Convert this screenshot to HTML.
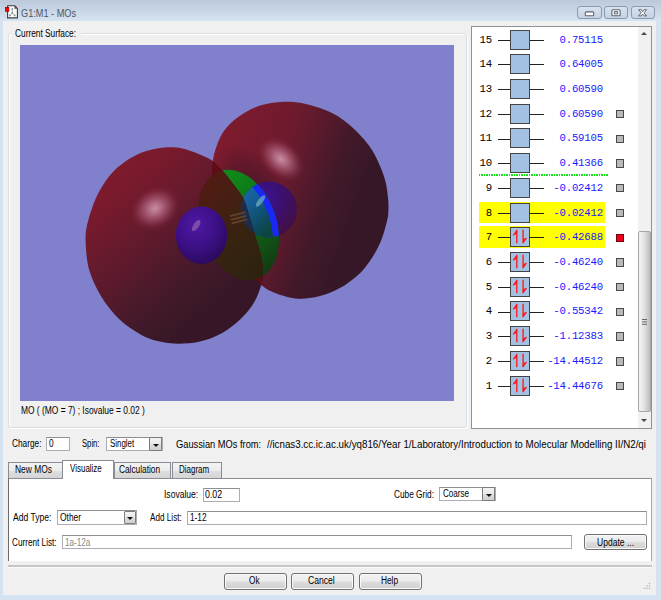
<!DOCTYPE html>
<html><head><meta charset="utf-8"><title>G1:M1 - MOs</title>
<style>
html,body{margin:0;padding:0}
body{width:661px;height:600px;overflow:hidden;position:relative;background:#d3e1f1;font-family:"Liberation Sans", sans-serif}
.abs,.t,.m,div,i{position:absolute;box-sizing:border-box}
.t{white-space:pre;line-height:1;transform-origin:0 0;display:block}
#titlebar{left:0;top:0;width:661px;height:22px;background:linear-gradient(#bbcadb,#c8d6e6 50%,#d8e5f3)}
#frame{left:0;top:0;width:661px;height:600px;background:#d5e2f1}
#content{left:3px;top:21px;width:653px;height:573.5px;background:#f0f0f0}
.cb{top:5.5px;height:13.5px;border:1px solid #8d9aae;border-radius:3px;background:linear-gradient(#d8e2ef,#c4d2e4)}
#gb{left:7.5px;top:33px;width:459px;height:394.5px;border:1px solid #d5dfe5;border-radius:3px;box-shadow:inset 1px 1px 0 #fff, 1px 1px 0 #fff}
#gbl{left:12px;top:26px;width:70px;height:14px;background:#f0f0f0}
#view{left:20px;top:45px;width:434px;height:355.5px;background:#8080cc;overflow:hidden}
#mop{left:470.5px;top:26px;width:181px;height:402.5px;background:#fff;border:1px solid #8d9197}
#sb{left:166.5px;top:0px;width:12.5px;height:400.5px;background:#f1f1f1}
#thumb{left:0px;top:204px;width:12.5px;height:180.5px;border:1px solid #a6a6aa;border-radius:2px;background:linear-gradient(90deg,#f3f3f3 0,#e6e6e6 40%,#c8c8cc 85%,#b8b8be)}
.hl{left:7.5px;width:126px;height:21.7px;background:#ffff00}
.ln{left:26.8px;width:45.5px;height:1px;background:#222}
.bx{left:38.8px;width:20px;height:20px;background:#a3c1e3;border:1px solid #444}
.m{font:10.7px "Liberation Mono", monospace;line-height:1;white-space:pre;letter-spacing:-0.22px}
.num{left:0;width:20.4px;text-align:right;color:#000}
.en{left:40px;width:91.4px;text-align:right;color:#1a1aff}
.sq{left:144.3px;width:8.4px;height:8.4px;background:#b9b9b9;border:1px solid #484848}
.sq.red{background:#e8001c;border-color:#7a0010}
.up,.dn{display:block}
.inp{background:#fff;border:1px solid #abadb3;border-top-color:#8e8f93}
.btn{border:1px solid #707070;border-radius:3px;background:linear-gradient(#f2f2f2,#ebebeb 48%,#dddddd 52%,#cfcfcf);box-shadow:inset 0 0 0 1px #fafafa}
.dd{border:1px solid #7c7c7c;border-radius:1px;background:linear-gradient(#f2f2f2,#e9e9e9 48%,#dcdcdc 52%,#d0d0d0)}
.dd:after{content:"";position:absolute;left:50%;top:50%;margin:0px 0 0 -3px;border:3px solid transparent;border-top:3.4px solid #111;border-bottom:0}
.tab{border:1px solid #898c95;border-bottom:0;background:linear-gradient(#f3f3f3,#ebebeb 50%,#dedede 52%,#d4d4d4)}
.tab.sel{background:#fff}
#pane{left:7.5px;top:478px;width:644.5px;height:83px;background:#fff;border:1px solid #898c95;border-left-color:#6a6a6a;border-right-color:#a8a8a8;border-bottom:0}
</style></head><body>
<div id="frame"></div>
<div id="titlebar"></div>
<div id="content"></div>
<!-- window icon -->
<svg style="position:absolute;left:0;top:0" width="24" height="22" viewBox="0 0 24 22">
 <path d="M7.6 5.8h7.2l2.6 2.8v9.3h-9.8z" fill="#fff" stroke="#3a3a3a" stroke-width="1.1" stroke-linejoin="round"/>
 <path d="M14.8 5.8v2.8h2.6" fill="none" stroke="#555" stroke-width=".8"/>
 <circle cx="15.8" cy="7.3" r=".8" fill="#d00"/>
 <path d="M12.3 9v4M12.3 13l-2.4 2.5M12.3 13l2.4 2.5" stroke="#999" stroke-width="0.8" fill="none"/>
 <g fill="#8a8a8a"><circle cx="12.3" cy="8.9" r=".9"/><circle cx="12.3" cy="12.9" r=".9"/><circle cx="9.9" cy="15.5" r=".9"/><circle cx="14.7" cy="15.5" r=".9"/></g>
 <rect x="5.3" y="7.3" width="3.6" height="4" fill="#ff0000" stroke="#8a0000" stroke-width=".6"/>
</svg>
<div class="cb" style="left:577px;width:24.5px"></div>
<div class="cb" style="left:604px;width:24px"></div>
<div class="cb" style="left:630.5px;width:24.5px"></div>
<svg style="position:absolute;left:570px;top:0" width="91" height="22" viewBox="570 0 91 22">
 <rect x="585.3" y="11.9" width="8.4" height="3.8" rx="1" fill="#fff" stroke="#5f6670" stroke-width="1.1"/>
 <rect x="611.9" y="9.8" width="8.2" height="5.9" rx="1" fill="#fff" stroke="#5f6670" stroke-width="1.1"/>
 <rect x="614.3" y="11.6" width="3.4" height="2.3" fill="#c9d6e6" stroke="#5f6670" stroke-width=".9"/>
 <path d="M638.6 9.7h2.6l1.4 1.9 1.4-1.9h2.6l-2.6 3.1 2.6 3.1h-2.6l-1.4-1.9-1.4 1.9h-2.6l2.6-3.1z" fill="#fff" stroke="#5f6670" stroke-width="1" stroke-linejoin="round"/>
</svg>

<div id="gb"></div><div id="gbl"></div>
<div id="view"><svg width="434" height="356" viewBox="20 45 434 356" style="position:absolute;left:0;top:0">
<defs>
 <linearGradient id="s_gl" gradientUnits="userSpaceOnUse" x1="115" y1="165" x2="224.3" y2="295.2"><stop offset="0" stop-color="#7e1b2e"/><stop offset=".13" stop-color="#7a1a2c"/><stop offset=".36" stop-color="#681a2d"/><stop offset=".53" stop-color="#5a1a2c"/><stop offset=".66" stop-color="#4e1a2b"/><stop offset=".82" stop-color="#41192a"/><stop offset=".95" stop-color="#3a1828"/><stop offset="1" stop-color="#371727"/></linearGradient>
 <linearGradient id="s_gr" gradientUnits="userSpaceOnUse" x1="213" y1="160" x2="358.7" y2="213"><stop offset="0" stop-color="#7e1b2e"/><stop offset=".4" stop-color="#6e1a2d"/><stop offset=".58" stop-color="#5a1a2c"/><stop offset=".77" stop-color="#42192a"/><stop offset=".95" stop-color="#381828"/><stop offset="1" stop-color="#361727"/></linearGradient>
 <radialGradient id="hl1"><stop offset="0" stop-color="#d49cb0" stop-opacity=".9"/><stop offset=".3" stop-color="#bc7690" stop-opacity=".78"/><stop offset=".6" stop-color="#a4546e" stop-opacity=".5"/><stop offset=".85" stop-color="#8c3450" stop-opacity=".15"/><stop offset="1" stop-color="#7a1d33" stop-opacity="0"/></radialGradient>
 <radialGradient id="shd"><stop offset="0" stop-color="#2e1424" stop-opacity=".5"/><stop offset=".6" stop-color="#2e1424" stop-opacity=".3"/><stop offset="1" stop-color="#2e1424" stop-opacity="0"/></radialGradient>
 <radialGradient id="s_gp" cx=".4" cy=".32" r=".7"><stop offset="0" stop-color="#4f18a2"/><stop offset=".55" stop-color="#3d1088"/><stop offset="1" stop-color="#2b0a5c"/></radialGradient>
 <radialGradient id="gp2" cx=".35" cy=".3" r=".8"><stop offset="0" stop-color="#3c1296"/><stop offset=".5" stop-color="#3b1070"/><stop offset="1" stop-color="#43103c"/></radialGradient>
 <linearGradient id="gg" gradientUnits="userSpaceOnUse" x1="228" y1="172" x2="266" y2="276"><stop offset="0" stop-color="#0f8c1a"/><stop offset=".3" stop-color="#0e7c18"/><stop offset=".65" stop-color="#0f5e15"/><stop offset="1" stop-color="#143814"/></linearGradient>
 <linearGradient id="go" gradientUnits="userSpaceOnUse" x1="205" y1="175" x2="260" y2="275"><stop offset="0" stop-color="#541a12"/><stop offset=".35" stop-color="#432012"/><stop offset=".7" stop-color="#332410"/><stop offset="1" stop-color="#2c220f"/></linearGradient>
 <linearGradient id="s_gb" gradientUnits="userSpaceOnUse" x1="250" y1="185" x2="275" y2="238"><stop offset="0" stop-color="#1b70b0"/><stop offset=".45" stop-color="#155e96"/><stop offset=".8" stop-color="#0e4c62"/><stop offset="1" stop-color="#0b4640"/></linearGradient>
 <clipPath id="cSph"><ellipse cx="269" cy="209.5" rx="28" ry="28"/></clipPath>
 <clipPath id="cL"><path d="M173.3 147.3C177.8 147.6 182.3 148.4 187.0 149.7C191.7 151.0 197.2 153.3 201.5 155.2C205.8 157.1 209.0 158.1 212.8 161.0C216.6 163.9 220.4 168.2 224.1 172.4C227.8 176.6 231.4 181.5 234.7 186.0C238.0 190.5 241.2 193.9 243.8 199.6C246.4 205.3 248.6 214.1 250.5 220.0C252.4 225.9 253.2 229.0 255.0 235.0C256.8 241.0 259.7 250.0 261.0 256.0C262.3 262.0 262.9 266.3 263.0 271.0C263.1 275.7 263.0 278.7 261.5 284.0C260.0 289.3 257.5 296.7 254.0 302.6C250.5 308.5 245.7 314.2 240.4 319.3C235.1 324.4 228.8 329.2 222.2 332.9C215.6 336.6 208.3 339.5 201.0 341.3C193.7 343.1 185.4 343.8 178.3 343.8C171.2 343.8 165.0 342.9 158.7 341.3C152.4 339.7 147.1 338.1 140.5 334.4C133.9 330.7 125.8 325.6 119.3 319.3C112.8 313.0 106.2 304.9 101.2 296.6C96.2 288.3 91.6 278.7 89.0 269.3C86.4 259.9 85.8 247.7 85.6 240.0C85.3 232.3 86.3 228.9 87.5 223.3C88.7 217.8 90.4 212.2 92.5 206.7C94.6 201.1 96.8 195.6 100.0 190.0C103.2 184.4 107.5 178.0 111.7 173.3C115.9 168.6 120.0 165.2 125.0 161.7C130.0 158.2 135.9 154.8 141.7 152.5C147.5 150.2 154.7 148.9 160.0 148.0C165.3 147.1 168.8 147.0 173.3 147.3z"/></clipPath>
 <clipPath id="cR"><path d="M280.0 102.0C285.3 101.5 289.0 101.5 294.0 102.0C299.0 102.5 304.0 103.3 310.0 105.0C316.0 106.7 324.0 109.2 330.0 112.0C336.0 114.8 341.0 118.2 346.0 122.0C351.0 125.8 355.7 130.3 360.0 135.0C364.3 139.7 368.7 144.8 372.0 150.0C375.3 155.2 377.7 160.7 380.0 166.0C382.3 171.3 384.3 176.7 385.6 182.0C386.9 187.3 387.5 193.3 388.0 198.0C388.5 202.7 388.6 206.2 388.4 210.0C388.2 213.8 388.5 215.2 387.0 221.0C385.5 226.8 383.3 236.4 379.4 244.5C375.5 252.6 369.9 262.2 363.5 269.4C357.1 276.6 348.4 283.1 340.8 287.6C333.2 292.1 325.6 294.8 318.0 296.6C310.4 298.4 302.9 299.3 295.4 298.5C287.8 297.7 278.6 294.4 272.7 292.0C266.8 289.6 263.8 287.2 260.2 284.0C256.6 280.8 254.2 276.8 250.9 272.6C247.6 268.4 243.6 263.5 240.3 259.0C237.0 254.5 233.8 251.1 231.2 245.4C228.6 239.7 226.4 230.9 224.5 225.0C222.6 219.1 221.8 216.0 220.0 210.0C218.2 204.0 215.3 195.0 214.0 189.0C212.7 183.0 212.2 178.8 212.0 174.0C211.8 169.2 212.3 164.3 213.0 160.0C213.7 155.7 214.5 152.3 216.0 148.0C217.5 143.7 219.3 138.3 222.0 134.0C224.7 129.7 228.0 125.7 232.0 122.0C236.0 118.3 241.0 114.8 246.0 112.0C251.0 109.2 256.3 106.7 262.0 105.0C267.7 103.3 274.7 102.5 280.0 102.0z"/></clipPath>
 <clipPath id="cLens"><ellipse cx="238.5" cy="225" rx="38" ry="57" transform="rotate(-19.5 238.5 225)"/></clipPath>
</defs>
<path d="M280.0 102.0C285.3 101.5 289.0 101.5 294.0 102.0C299.0 102.5 304.0 103.3 310.0 105.0C316.0 106.7 324.0 109.2 330.0 112.0C336.0 114.8 341.0 118.2 346.0 122.0C351.0 125.8 355.7 130.3 360.0 135.0C364.3 139.7 368.7 144.8 372.0 150.0C375.3 155.2 377.7 160.7 380.0 166.0C382.3 171.3 384.3 176.7 385.6 182.0C386.9 187.3 387.5 193.3 388.0 198.0C388.5 202.7 388.6 206.2 388.4 210.0C388.2 213.8 388.5 215.2 387.0 221.0C385.5 226.8 383.3 236.4 379.4 244.5C375.5 252.6 369.9 262.2 363.5 269.4C357.1 276.6 348.4 283.1 340.8 287.6C333.2 292.1 325.6 294.8 318.0 296.6C310.4 298.4 302.9 299.3 295.4 298.5C287.8 297.7 278.6 294.4 272.7 292.0C266.8 289.6 263.8 287.2 260.2 284.0C256.6 280.8 254.2 276.8 250.9 272.6C247.6 268.4 243.6 263.5 240.3 259.0C237.0 254.5 233.8 251.1 231.2 245.4C228.6 239.7 226.4 230.9 224.5 225.0C222.6 219.1 221.8 216.0 220.0 210.0C218.2 204.0 215.3 195.0 214.0 189.0C212.7 183.0 212.2 178.8 212.0 174.0C211.8 169.2 212.3 164.3 213.0 160.0C213.7 155.7 214.5 152.3 216.0 148.0C217.5 143.7 219.3 138.3 222.0 134.0C224.7 129.7 228.0 125.7 232.0 122.0C236.0 118.3 241.0 114.8 246.0 112.0C251.0 109.2 256.3 106.7 262.0 105.0C267.7 103.3 274.7 102.5 280.0 102.0z" fill="url(#s_gr)"/>
<g clip-path="url(#cR)"><ellipse cx="252" cy="192" rx="30" ry="52" transform="rotate(-30 252 192)" fill="url(#shd)"/></g>
<ellipse cx="281" cy="159" rx="28" ry="19" transform="rotate(42 281 159)" fill="url(#hl1)"/>
<ellipse cx="269" cy="209.5" rx="28" ry="28" fill="url(#gp2)"/>
<!-- green lens -->
<ellipse cx="238.5" cy="225" rx="38" ry="57" transform="rotate(-19.5 238.5 225)" fill="url(#gg)"/>
<g clip-path="url(#cLens)">
 <ellipse cx="269" cy="209.5" rx="28" ry="28" fill="#1a28f5"/>
 <g clip-path="url(#cSph)"><ellipse cx="232.6" cy="227.1" rx="38" ry="57" transform="rotate(-19.5 232.6 227.1)" fill="url(#s_gb)"/></g>
 <ellipse cx="260.5" cy="201" rx="2.4" ry="7" transform="rotate(38 260.5 201)" fill="#7ab8c8" fill-opacity=".65"/>
</g>
<!-- left lobe -->
<path d="M173.3 147.3C177.8 147.6 182.3 148.4 187.0 149.7C191.7 151.0 197.2 153.3 201.5 155.2C205.8 157.1 209.0 158.1 212.8 161.0C216.6 163.9 220.4 168.2 224.1 172.4C227.8 176.6 231.4 181.5 234.7 186.0C238.0 190.5 241.2 193.9 243.8 199.6C246.4 205.3 248.6 214.1 250.5 220.0C252.4 225.9 253.2 229.0 255.0 235.0C256.8 241.0 259.7 250.0 261.0 256.0C262.3 262.0 262.9 266.3 263.0 271.0C263.1 275.7 263.0 278.7 261.5 284.0C260.0 289.3 257.5 296.7 254.0 302.6C250.5 308.5 245.7 314.2 240.4 319.3C235.1 324.4 228.8 329.2 222.2 332.9C215.6 336.6 208.3 339.5 201.0 341.3C193.7 343.1 185.4 343.8 178.3 343.8C171.2 343.8 165.0 342.9 158.7 341.3C152.4 339.7 147.1 338.1 140.5 334.4C133.9 330.7 125.8 325.6 119.3 319.3C112.8 313.0 106.2 304.9 101.2 296.6C96.2 288.3 91.6 278.7 89.0 269.3C86.4 259.9 85.8 247.7 85.6 240.0C85.3 232.3 86.3 228.9 87.5 223.3C88.7 217.8 90.4 212.2 92.5 206.7C94.6 201.1 96.8 195.6 100.0 190.0C103.2 184.4 107.5 178.0 111.7 173.3C115.9 168.6 120.0 165.2 125.0 161.7C130.0 158.2 135.9 154.8 141.7 152.5C147.5 150.2 154.7 148.9 160.0 148.0C165.3 147.1 168.8 147.0 173.3 147.3z" fill="url(#s_gl)"/>
<g clip-path="url(#cL)">
 <path d="M280.0 102.0C285.3 101.5 289.0 101.5 294.0 102.0C299.0 102.5 304.0 103.3 310.0 105.0C316.0 106.7 324.0 109.2 330.0 112.0C336.0 114.8 341.0 118.2 346.0 122.0C351.0 125.8 355.7 130.3 360.0 135.0C364.3 139.7 368.7 144.8 372.0 150.0C375.3 155.2 377.7 160.7 380.0 166.0C382.3 171.3 384.3 176.7 385.6 182.0C386.9 187.3 387.5 193.3 388.0 198.0C388.5 202.7 388.6 206.2 388.4 210.0C388.2 213.8 388.5 215.2 387.0 221.0C385.5 226.8 383.3 236.4 379.4 244.5C375.5 252.6 369.9 262.2 363.5 269.4C357.1 276.6 348.4 283.1 340.8 287.6C333.2 292.1 325.6 294.8 318.0 296.6C310.4 298.4 302.9 299.3 295.4 298.5C287.8 297.7 278.6 294.4 272.7 292.0C266.8 289.6 263.8 287.2 260.2 284.0C256.6 280.8 254.2 276.8 250.9 272.6C247.6 268.4 243.6 263.5 240.3 259.0C237.0 254.5 233.8 251.1 231.2 245.4C228.6 239.7 226.4 230.9 224.5 225.0C222.6 219.1 221.8 216.0 220.0 210.0C218.2 204.0 215.3 195.0 214.0 189.0C212.7 183.0 212.2 178.8 212.0 174.0C211.8 169.2 212.3 164.3 213.0 160.0C213.7 155.7 214.5 152.3 216.0 148.0C217.5 143.7 219.3 138.3 222.0 134.0C224.7 129.7 228.0 125.7 232.0 122.0C236.0 118.3 241.0 114.8 246.0 112.0C251.0 109.2 256.3 106.7 262.0 105.0C267.7 103.3 274.7 102.5 280.0 102.0z" fill="#5e0d16"/>
 <ellipse cx="238.5" cy="225" rx="38" ry="57" transform="rotate(-19.5 238.5 225)" fill="url(#go)"/>
 <g clip-path="url(#cLens)"><ellipse cx="269" cy="209.5" rx="28" ry="28" fill="#15305c" fill-opacity=".8"/></g>
</g>
<ellipse cx="155" cy="208.3" rx="27" ry="22" transform="rotate(-30 155 208.3)" fill="url(#hl1)"/>
<ellipse cx="201.5" cy="235.2" rx="25.7" ry="28.7" fill="url(#s_gp)"/>
<ellipse cx="196.2" cy="225.5" rx="2.8" ry="6.5" transform="rotate(35 196.2 225.5)" fill="#a070b4" fill-opacity=".6"/>
<path d="M230 216.2l15.5-4M230.8 219.8l15.5-4M231.6 223.4l15.5-4" stroke="#5e442a" stroke-width="1.9" fill="none"/>
</svg></div>

<div id="mop">
<div class="ln" style="top:12.6px"></div>
<div class="bx" style="top:2.5px"></div>
<span class="m num" style="top:7.5px">15</span>
<span class="m en" style="top:7.5px">0.75115</span>
<div class="ln" style="top:37.3px"></div>
<div class="bx" style="top:27.2px"></div>
<span class="m num" style="top:32.2px">14</span>
<span class="m en" style="top:32.2px">0.64005</span>
<div class="ln" style="top:62.0px"></div>
<div class="bx" style="top:51.9px"></div>
<span class="m num" style="top:56.9px">13</span>
<span class="m en" style="top:56.9px">0.60590</span>
<div class="ln" style="top:86.8px"></div>
<div class="bx" style="top:76.7px"></div>
<span class="m num" style="top:81.7px">12</span>
<span class="m en" style="top:81.7px">0.60590</span>
<div class="sq" style="top:83.0px"></div>
<div class="ln" style="top:111.5px"></div>
<div class="bx" style="top:101.4px"></div>
<span class="m num" style="top:106.4px">11</span>
<span class="m en" style="top:106.4px">0.59105</span>
<div class="sq" style="top:107.7px"></div>
<div class="ln" style="top:136.2px"></div>
<div class="bx" style="top:126.1px"></div>
<span class="m num" style="top:131.1px">10</span>
<span class="m en" style="top:131.1px">0.41366</span>
<div class="sq" style="top:132.4px"></div>
<div class="ln" style="top:160.9px"></div>
<div class="bx" style="top:150.8px"></div>
<span class="m num" style="top:155.8px">9</span>
<span class="m en" style="top:155.8px">-0.02412</span>
<div class="sq" style="top:157.1px"></div>
<div class="hl" style="top:174.5px"></div>
<div class="ln" style="top:185.6px"></div>
<div class="bx" style="top:175.5px"></div>
<span class="m num" style="top:180.5px">8</span>
<span class="m en" style="top:180.5px">-0.02412</span>
<div class="sq" style="top:181.8px"></div>
<div class="hl" style="top:199.3px"></div>
<div class="ln" style="top:210.4px"></div>
<div class="bx" style="top:200.3px"><svg width="18" height="18" viewBox="0 0 18 18" style="position:absolute;left:0;top:0"><g stroke="#ff1515" stroke-width="1.3" fill="#ff1515" stroke-linejoin="round"><path d="M5.8 1.8V15.2" fill="none"/><path d="M5.6 2.4L2.1 7.2L5.6 5.6z" stroke-width=".8"/><path d="M12.1 1.8V15.2" fill="none"/><path d="M12.3 14.8L15.6 10.2L12.3 11.4z" stroke-width=".8"/></g></svg></div>
<span class="m num" style="top:205.3px">7</span>
<span class="m en" style="top:205.3px">-0.42688</span>
<div class="sq red" style="top:206.6px"></div>
<div class="ln" style="top:235.1px"></div>
<div class="bx" style="top:225.0px"><svg width="18" height="18" viewBox="0 0 18 18" style="position:absolute;left:0;top:0"><g stroke="#ff1515" stroke-width="1.3" fill="#ff1515" stroke-linejoin="round"><path d="M5.8 1.8V15.2" fill="none"/><path d="M5.6 2.4L2.1 7.2L5.6 5.6z" stroke-width=".8"/><path d="M12.1 1.8V15.2" fill="none"/><path d="M12.3 14.8L15.6 10.2L12.3 11.4z" stroke-width=".8"/></g></svg></div>
<span class="m num" style="top:230.0px">6</span>
<span class="m en" style="top:230.0px">-0.46240</span>
<div class="sq" style="top:231.3px"></div>
<div class="ln" style="top:259.8px"></div>
<div class="bx" style="top:249.7px"><svg width="18" height="18" viewBox="0 0 18 18" style="position:absolute;left:0;top:0"><g stroke="#ff1515" stroke-width="1.3" fill="#ff1515" stroke-linejoin="round"><path d="M5.8 1.8V15.2" fill="none"/><path d="M5.6 2.4L2.1 7.2L5.6 5.6z" stroke-width=".8"/><path d="M12.1 1.8V15.2" fill="none"/><path d="M12.3 14.8L15.6 10.2L12.3 11.4z" stroke-width=".8"/></g></svg></div>
<span class="m num" style="top:254.7px">5</span>
<span class="m en" style="top:254.7px">-0.46240</span>
<div class="sq" style="top:256.0px"></div>
<div class="ln" style="top:284.5px"></div>
<div class="bx" style="top:274.4px"><svg width="18" height="18" viewBox="0 0 18 18" style="position:absolute;left:0;top:0"><g stroke="#ff1515" stroke-width="1.3" fill="#ff1515" stroke-linejoin="round"><path d="M5.8 1.8V15.2" fill="none"/><path d="M5.6 2.4L2.1 7.2L5.6 5.6z" stroke-width=".8"/><path d="M12.1 1.8V15.2" fill="none"/><path d="M12.3 14.8L15.6 10.2L12.3 11.4z" stroke-width=".8"/></g></svg></div>
<span class="m num" style="top:279.4px">4</span>
<span class="m en" style="top:279.4px">-0.55342</span>
<div class="sq" style="top:280.7px"></div>
<div class="ln" style="top:309.2px"></div>
<div class="bx" style="top:299.1px"><svg width="18" height="18" viewBox="0 0 18 18" style="position:absolute;left:0;top:0"><g stroke="#ff1515" stroke-width="1.3" fill="#ff1515" stroke-linejoin="round"><path d="M5.8 1.8V15.2" fill="none"/><path d="M5.6 2.4L2.1 7.2L5.6 5.6z" stroke-width=".8"/><path d="M12.1 1.8V15.2" fill="none"/><path d="M12.3 14.8L15.6 10.2L12.3 11.4z" stroke-width=".8"/></g></svg></div>
<span class="m num" style="top:304.1px">3</span>
<span class="m en" style="top:304.1px">-1.12383</span>
<div class="sq" style="top:305.4px"></div>
<div class="ln" style="top:334.0px"></div>
<div class="bx" style="top:323.9px"><svg width="18" height="18" viewBox="0 0 18 18" style="position:absolute;left:0;top:0"><g stroke="#ff1515" stroke-width="1.3" fill="#ff1515" stroke-linejoin="round"><path d="M5.8 1.8V15.2" fill="none"/><path d="M5.6 2.4L2.1 7.2L5.6 5.6z" stroke-width=".8"/><path d="M12.1 1.8V15.2" fill="none"/><path d="M12.3 14.8L15.6 10.2L12.3 11.4z" stroke-width=".8"/></g></svg></div>
<span class="m num" style="top:328.9px">2</span>
<span class="m en" style="top:328.9px">-14.44512</span>
<div class="sq" style="top:330.2px"></div>
<div class="ln" style="top:358.7px"></div>
<div class="bx" style="top:348.6px"><svg width="18" height="18" viewBox="0 0 18 18" style="position:absolute;left:0;top:0"><g stroke="#ff1515" stroke-width="1.3" fill="#ff1515" stroke-linejoin="round"><path d="M5.8 1.8V15.2" fill="none"/><path d="M5.6 2.4L2.1 7.2L5.6 5.6z" stroke-width=".8"/><path d="M12.1 1.8V15.2" fill="none"/><path d="M12.3 14.8L15.6 10.2L12.3 11.4z" stroke-width=".8"/></g></svg></div>
<span class="m num" style="top:353.6px">1</span>
<span class="m en" style="top:353.6px">-14.44676</span>
<div class="sq" style="top:354.9px"></div>
<div style="left:7.5px;top:147.2px;width:129px;height:1.8px;background:repeating-linear-gradient(90deg,#0fe30f 0 1.35px,transparent 1.35px 2.5px)"></div>
<div id="sb"><div id="thumb"></div>
<div style="left:3.2px;top:4.7px;border:3px solid transparent;border-bottom:3.3px solid #484848;border-top:0"></div>
<div style="left:3.2px;top:391.5px;border:3px solid transparent;border-top:3.3px solid #484848;border-bottom:0"></div>
<div style="left:4px;top:291.8px;width:5px;height:1px;background:#666;box-shadow:0 2.4px 0 #666,0 4.8px 0 #666"></div>
</div>
</div>

<!-- charge / spin row -->
<div class="inp" style="left:46px;top:436.5px;width:23.5px;height:14.5px"></div>
<div class="inp" style="left:106px;top:436.5px;width:56.5px;height:14.5px"></div>
<div class="dd" style="left:149.3px;top:437px;width:12.7px;height:13.5px"></div>

<!-- tabs -->
<div class="tab" style="left:7.5px;top:462px;width:55px;height:17px"></div>
<div class="tab" style="left:113.5px;top:462px;width:57.5px;height:17px"></div>
<div class="tab" style="left:171.5px;top:462px;width:50px;height:17px"></div>
<div id="pane"></div>
<div class="tab sel" style="left:62px;top:459.5px;width:52px;height:19.5px"></div>

<div class="inp" style="left:203px;top:487.5px;width:36.5px;height:14px"></div>
<div class="inp" style="left:439px;top:486.5px;width:56.5px;height:14.5px"></div>
<div class="dd" style="left:482.3px;top:487px;width:12.7px;height:13.5px"></div>
<div class="inp" style="left:57px;top:510px;width:79.5px;height:14.5px"></div>
<div class="dd" style="left:123.5px;top:510.5px;width:12.7px;height:13.5px"></div>
<div class="inp" style="left:186.5px;top:510.5px;width:460.5px;height:14.5px"></div>
<div class="inp" style="left:61.5px;top:534.5px;width:510px;height:14.5px"></div>
<div class="btn" style="left:584px;top:533.5px;width:62.5px;height:16.5px"></div>

<div style="left:7.5px;top:565px;width:644.5px;height:1.6px;background:#c6c6c6;box-shadow:0 1px 0 #fbfbfb"></div>
<div class="btn" style="left:223.5px;top:572.5px;width:63px;height:17px"></div>
<div class="btn" style="left:291px;top:572.5px;width:63px;height:17px"></div>
<div class="btn" style="left:358.5px;top:572.5px;width:63px;height:17px"></div>
<svg style="position:absolute;left:642px;top:581px" width="10" height="10" viewBox="642 581 10 10"><g fill="#b4b4b4"><rect x="648.9" y="582.7" width="1.3" height="1.3"/><rect x="648.9" y="585.2" width="1.3" height="1.3"/><rect x="648.9" y="587.7" width="1.3" height="1.3"/><rect x="646.4" y="585.2" width="1.3" height="1.3"/><rect x="646.4" y="587.7" width="1.3" height="1.3"/><rect x="643.9" y="587.7" width="1.3" height="1.3"/></g></svg>

<span class="t" style="left:21.0px;top:8.11px;font-size:10.5px;color:#4d5866;transform:scaleX(0.8728)">G1:M1 - MOs</span>
<span class="t" style="left:15.0px;top:28.93px;font-size:10px;color:#000;transform:scaleX(0.8313)">Current Surface:</span>
<span class="t" style="left:20.6px;top:406.14px;font-size:10px;color:#000;transform:scaleX(0.8399)">MO ( (MO = 7) ; Isovalue = 0.02 )</span>
<span class="t" style="left:11.5px;top:439.44px;font-size:10px;color:#000;transform:scaleX(0.8292)">Charge:</span>
<span class="t" style="left:48.6px;top:439.44px;font-size:10px;color:#000;transform:scaleX(0.8270)">0</span>
<span class="t" style="left:82.3px;top:439.44px;font-size:10px;color:#000;transform:scaleX(0.7676)">Spin:</span>
<span class="t" style="left:110.4px;top:438.74px;font-size:10px;color:#000;transform:scaleX(0.7914)">Singlet</span>
<span class="t" style="left:176.4px;top:439.11px;font-size:10.5px;color:#000;transform:scaleX(0.8839)">Gaussian MOs from:</span>
<span class="t" style="left:267.0px;top:439.11px;font-size:10.5px;color:#000;transform:scaleX(0.9298)">//icnas3.cc.ic.ac.uk/yq816/Year 1/Laboratory/Introduction to Molecular Modelling II/N2/qi</span>
<span class="t" style="left:14.5px;top:464.54px;font-size:10px;color:#000;transform:scaleX(0.8404)">New MOs</span>
<span class="t" style="left:69.6px;top:463.54px;font-size:10px;color:#000;transform:scaleX(0.7981)">Visualize</span>
<span class="t" style="left:118.8px;top:464.54px;font-size:10px;color:#000;transform:scaleX(0.8306)">Calculation</span>
<span class="t" style="left:178.7px;top:464.54px;font-size:10px;color:#000;transform:scaleX(0.7990)">Diagram</span>
<span class="t" style="left:164.1px;top:489.94px;font-size:10px;color:#000;transform:scaleX(0.8543)">Isovalue:</span>
<span class="t" style="left:205.3px;top:490.14px;font-size:10px;color:#000;transform:scaleX(0.8835)">0.02</span>
<span class="t" style="left:394.0px;top:489.54px;font-size:10px;color:#000;transform:scaleX(0.8271)">Cube Grid:</span>
<span class="t" style="left:443.0px;top:489.04px;font-size:10px;color:#000;transform:scaleX(0.8062)">Coarse</span>
<span class="t" style="left:12.8px;top:512.93px;font-size:10px;color:#000;transform:scaleX(0.8560)">Add Type:</span>
<span class="t" style="left:59.7px;top:512.54px;font-size:10px;color:#000;transform:scaleX(0.8435)">Other</span>
<span class="t" style="left:149.9px;top:512.93px;font-size:10px;color:#000;transform:scaleX(0.8170)">Add List:</span>
<span class="t" style="left:189.9px;top:513.13px;font-size:10px;color:#000;transform:scaleX(0.8294)">1-12</span>
<span class="t" style="left:12.4px;top:537.53px;font-size:10px;color:#000;transform:scaleX(0.8188)">Current List:</span>
<span class="t" style="left:65.0px;top:537.83px;font-size:10px;color:#8a8a8a;transform:scaleX(0.8157)">1a-12a</span>
<span class="t" style="left:597.0px;top:537.53px;font-size:10px;color:#000;transform:scaleX(0.8533)">Update ...</span>
<span class="t" style="left:249.2px;top:576.13px;font-size:10px;color:#000;transform:scaleX(0.8215)">Ok</span>
<span class="t" style="left:308.3px;top:576.13px;font-size:10px;color:#000;transform:scaleX(0.8574)">Cancel</span>
<span class="t" style="left:381.4px;top:576.13px;font-size:10px;color:#000;transform:scaleX(0.8310)">Help</span>
</body></html>
